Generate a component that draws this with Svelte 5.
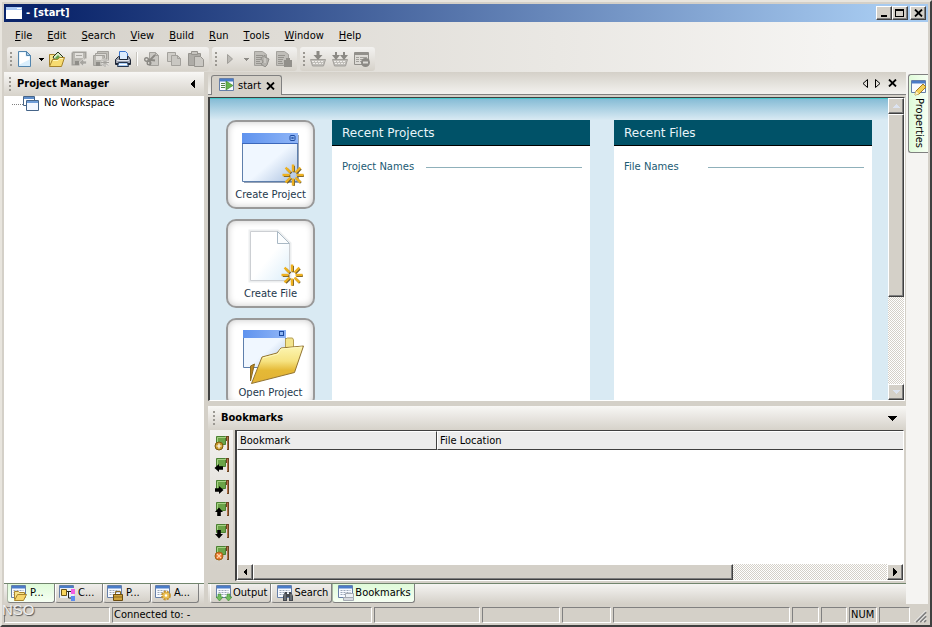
<script>
  const menus = ['File', 'Edit', 'Search', 'View', 'Build', 'Run', 'Tools', 'Window', 'Help'];
  const launchers = [
    { label: 'Create Project', art: 'window' },
    { label: 'Create File', art: 'file' },
    { label: 'Open Project', art: 'folder' }
  ];
  const cards = [
    { title: 'Recent Projects', sub: 'Project Names' },
    { title: 'Recent Files', sub: 'File Names' }
  ];
  const flags = ['add', 'left', 'right', 'up', 'down', 'clear'];
  const flagNames = {
    add: 'Add bookmark', left: 'Previous bookmark', right: 'Next bookmark',
    up: 'Previous in file', down: 'Next in file', clear: 'Clear bookmarks'
  };
  const sideTabs = [
    { label: 'P...', badge: 'folder', on: true },
    { label: 'C...', badge: 'classes', on: false },
    { label: 'P...', badge: 'case', on: false },
    { label: 'A...', badge: 'gear', on: false }
  ];
  const dockTabs = [
    { label: 'Output', badge: 'output', on: false },
    { label: 'Search', badge: 'search', on: false },
    { label: 'Bookmarks', badge: 'page', on: true }
  ];
  const cells = [
    { w: 106, text: '' }, { w: 0, text: 'Connected to: -' }, { w: 106, text: '' },
    { w: 78, text: '' }, { w: 49, text: '' }, { w: 177, text: '' }, { w: 27, text: '' },
    { w: 26, text: '' }, { w: 28, text: 'NUM' }, { w: 31, text: '' }
  ];
</script>

{#snippet tri(dir)}
  <svg width="8" height="8" viewBox="0 0 8 8" aria-hidden="true" shape-rendering="crispEdges">
    {#if dir === 'down'}<path d="M0 2h8L4 6z" />
    {:else if dir === 'up'}<path d="M0 6h8L4 2z" />
    {:else if dir === 'left'}<path d="M6 0v8L2 4z" />
    {:else}<path d="M2 0v8l4-4z" />{/if}
  </svg>
{/snippet}

{#snippet cross()}
  <svg width="9" height="8" viewBox="0 0 9 8" aria-hidden="true">
    <path d="M1 .5l7 7M8 .5l-7 7" stroke="#000" stroke-width="1.8" />
  </svg>
{/snippet}

{#snippet tool(name)}
  <svg width="16" height="16" viewBox="0 0 16 16" aria-hidden="true">
    {#if name === 'new'}
      <path d="M1.500 .5h8l4 4v11h-12z" fill="#d9eefc" stroke="#5385ad" />
      <path d="M2.500 1.500h6v4h4v3l-10 5z" fill="#fff" />
      <path d="M9.500 .5v4h4z" fill="#a9cdea" stroke="#5385ad" />
    {:else if name === 'open'}
      <path d="M.5 14.500v-11h5l1 2h7v3" fill="#f7e58b" stroke="#a5822b" />
      <path d="M4 6l5-5 5 5-2 3H6z" fill="#d9ecc8" stroke="#253218" />
      <path d="M6 7l3-3 3 3-1 2H7z" fill="#6aa54e" />
      <path d="M.5 15.500l3-7h5l2-2h5l-3 9z" fill="#f7db70" stroke="#a5822b" />
      <path d="M4 9.500h5l2-2h3" fill="none" stroke="#fff6b8" />
    {:else if name === 'save'}
      <path d="M1.500 1.500h13v6M1.500 1.500v12h7" fill="none" stroke="#a3a19c" stroke-width="2" />
      <path d="M2 2h12v6l-5 5H2z" fill="#b9b7b1" />
      <path d="M4 2h8v5H4z" fill="#e3e1dd" /><path d="M5 4.500h6" stroke="#aaa8a3" />
      <path d="M4 10h4v4H4z" fill="#8f8d88" />
      <path d="M15.500 10v3h-3v2.500L8 11.500l4.500-4V10z" fill="#a7a5a0" stroke="#e3e1dd" stroke-width=".7" />
    {:else if name === 'saveall'}
      <path d="M4.500 .5h11v9h-11z" fill="#c2c0ba" stroke="#a3a19c" />
      <path d="M2.500 2.500h11v9h-11z" fill="#dad8d3" stroke="#a3a19c" />
      <path d="M.5 4.500h11v10H.5z" fill="#b9b7b1" stroke="#a3a19c" />
      <path d="M3 5h6v4H3z" fill="#e3e1dd" /><path d="M3 11h4v4H3z" fill="#8f8d88" />
      <path d="M12 7v9M7.500 11.500h8.500M9 8.500l6 6M15 8.500l-6 6" stroke="#e3e1dd" stroke-width="2" />
      <path d="M12 7v9M7.500 11.500h8.500M9 8.500l6 6M15 8.500l-6 6" stroke="#a3a19c" />
    {:else if name === 'print'}
      <path d="M4.500 .5h6l2 2v6h-8z" fill="#dcecfd" stroke="#3d76cd" />
      <path d="M.5 8.500l3-3h1v3h8v-3h1l2 3v5H.5z" fill="#9aa1b0" stroke="#1e2635" />
      <path d="M2 9.500h12" stroke="#e4e7ee" /><path d="M1 12.500h14" stroke="#1e2635" />
      <path d="M3.500 11.500h9l1 4h-11z" fill="#a8cdf6" stroke="#28364e" />
      <path d="M4 13.500h8" stroke="#fff" />
    {:else if name === 'cut'}
      <path d="M5.500 1.500h6l3 3v10h-9z" fill="#c9c7c2" stroke="#a3a19c" />
      <path d="M11.500 1.500v3h3" fill="none" stroke="#a3a19c" />
      <path d="M11 4L5 10M11 9.500L4 8.500" stroke="#8b8984" stroke-width="1.800" />
      <circle cx="2.500" cy="8.500" r="1.800" fill="none" stroke="#8b8984" stroke-width="1.400" />
      <circle cx="5" cy="12" r="1.800" fill="none" stroke="#8b8984" stroke-width="1.400" />
    {:else if name === 'copy'}
      <path d="M1.500 1.500h8v9h-8z" fill="#cfcdc8" stroke="#a3a19c" />
      <path d="M5.500 4.500h6l3 3v7h-9z" fill="#c9c7c2" stroke="#a3a19c" />
      <path d="M11.500 4.500v3h3" fill="none" stroke="#a3a19c" />
    {:else if name === 'paste'}
      <path d="M.5 2.500h12v12H.5z" fill="#aeaca7" stroke="#96948f" />
      <path d="M3.500 .5h6v3h-6z" fill="#c6c4bf" stroke="#96948f" />
      <path d="M6.500 5.500h6l3 3v7h-9z" fill="#c9c7c2" stroke="#96948f" />
    {:else if name === 'play'}
      <path d="M5.500 3.500v9l5-4.500z" fill="#bbb9b4" stroke="#a09e99" />
    {:else if name === 'compile' || name === 'rebuild'}
      <path d="M.5 .5h8l4 3v11H.5z" fill="#c0beb9" stroke="#a3a19c" />
      <path d="M2 4.500h7M2 6.500h6M2 8.500h5M2 10.500h4M2 12.500h5" stroke="#96948f" />
      {#if name === 'compile'}
        <path d="M7 7l4-3v2l4 2-2 6-2 2-4-3 2-2z" fill="#b3b1ac" stroke="#92908b" />
        <path d="M11 7v5" stroke="#dddbd6" />
      {:else}
        <path d="M8 9h8v7H8zM10 7h4v2h-4z" fill="#92908b" />
      {/if}
    {:else if name === 'load' || name === 'loadall'}
      <path d="M.5 8.500h15l-2 6.500h-11z" fill="#c0beb9" stroke="#a3a19c" />
      <path d="M2 10.500h12M3 12.500h10" stroke="#efedea" stroke-dasharray="2 1" />
      {#if name === 'load'}
        <path d="M6.500 0h3v4h3L8 9 3.500 4h3z" fill="#8b8984" />
      {:else}
        <path d="M3 1h2v3h3L4 9 0 4h3zM11 1h2v3h3l-4 5-4-5h3z" fill="#8b8984" />
      {/if}
    {:else if name === 'unload'}
      <path d="M.5 1.500h14v12H.5z" fill="#dddbd6" stroke="#92908b" />
      <path d="M1 3h13" stroke="#92908b" stroke-width="2" />
      <path d="M2 6.500h3M6 6.500h7M2 8.500h3M6 8.500h4M2 10.500h3M6 10.500h2" stroke="#a3a19c" />
      <circle cx="11.500" cy="11.500" r="4.500" fill="#8b8984" /><path d="M9 11.500h5" stroke="#dddbd6" stroke-width="2" />
    {/if}
  </svg>
{/snippet}

{#snippet pane(badge)}
  <svg width="16" height="16" viewBox="0 0 16 16" aria-hidden="true">
    <path d="M.5 .5h14v12H.5z" fill="#f7faff" stroke="#667fa8" />
    <path d="M1 1h13v2.500H1z" fill="#4a7cc8" />
    {#if badge !== 'props' && badge !== 'start'}
      <path d="M2.500 5.500h10M2.500 7.500h10M2.500 9.500h10" stroke="#9aa7b8" stroke-dasharray="2 1" />
    {/if}
    {#if badge === 'folder'}
      <path d="M3.500 14.500v-8h4l1 1h5v2" fill="#f6e28a" stroke="#a8842c" />
      <path d="M3.500 15.500l3-6h9l-3 6z" fill="#f6d56b" stroke="#a8842c" />
    {:else if badge === 'classes'}
      <path d="M1 3h14v10H1z" fill="#e8eef8" />
      <path d="M2.500 4.500h5v6h-5z" fill="#f8d55e" stroke="#6b5416" />
      <path d="M8 6.500h4M9.500 6v7h3" stroke="#222" fill="none" />
      <path d="M12 4h4v5h-4z" fill="#f45ee0" /><path d="M12 11h4v5h-4z" fill="#5b8cf0" />
    {:else if badge === 'case'}
      <path d="M6.500 9.500h9v6h-9z" fill="#d0a43b" stroke="#6b4c10" /><path d="M8.500 9V6.500h5V9M7 12h8" fill="none" stroke="#8d6a1e" />
    {:else if badge === 'gear'}
      <circle cx="11" cy="10.500" r="3.500" fill="#ecc257" stroke="#c79430" stroke-width="2.800" stroke-dasharray="2 .8" />
      <circle cx="11" cy="10.500" r="3" fill="#ecc257" /><circle cx="11" cy="10.500" r="1.200" fill="#fff" />
    {:else if badge === 'output'}
      <path d="M2 9h3v3h2l-3.500 4L0 12h2zM11 9h3v3h2l-3.500 4L9 12h2z" fill="#6fbd5d" stroke="#3f8436" stroke-width=".6" />
    {:else if badge === 'search'}
      <path d="M6 16v-5l2-4h2v2h2V7h2l2 4v5h-4v-4h-2v4z" fill="#44484e" />
      <path d="M8 9v6M14 9v6" stroke="#8d949d" />
    {:else if badge === 'page'}
      <path d="M7.500 8.500h8v4h-8z" fill="#eef2f6" stroke="#a5aab2" /><path d="M5.500 12.500h10v3h-10z" fill="#d7dae0" stroke="#a5aab2" />
    {:else if badge === 'props'}
      <path d="M4 15l1-4 7-7 3 3-7 7z" fill="#f2cf57" stroke="#a77e22" /><path d="M4 15l1-4 3 3z" fill="#fdf3c8" />
    {:else if badge === 'start'}
      <path d="M2 5.500h4M2 7.500h4M2 9.500h4" stroke="#538246" /><path d="M7 3v9l7-4.500z" fill="#66b54b" stroke="#3c7a2b" stroke-width=".6" />
    {/if}
  </svg>
{/snippet}

{#snippet flag(kind)}
  <svg width="16" height="16" viewBox="0 0 16 16" aria-hidden="true">
    <path d="M2.500 1.500h9v8h-9z" fill="#6ba348" stroke="#4b8132" /><path d="M3.500 10V2.500H12" fill="none" stroke="#a6d184" />
    <path d="M12 1h3v14h-2V6h-1z" fill="#6b4520" /><path d="M13.500 2v12" stroke="#b4704c" />
    {#if kind === 'add'}
      <circle cx="5" cy="11" r="4" fill="#c99a28" stroke="#7c5a10" /><path d="M5 8.500v5M2.500 11h5" stroke="#fff" stroke-width="1.200" />
    {:else if kind === 'clear'}
      <circle cx="5" cy="11" r="4" fill="#e8702c" stroke="#9c6515" /><path d="M3 9l4 4M7 9l-4 4" stroke="#ffd8a8" stroke-width="1.200" />
    {:else}
      <g transform="rotate({{ left: 0, up: 90, right: 180, down: 270 }[kind]} 5 11)">
        <path d="M.5 11l4.500-4v2.200h4v3.600H5V15z" />
      </g>
    {/if}
  </svg>
{/snippet}

{#snippet spark(x, y)}
  <g transform="translate({x} {y})">
    {#each [0, 45, 90, 135, 180, 225, 270, 315] as a}
      <path d="M0-3.500V-10" transform="translate(.8 .8) rotate({a})" stroke="#6e5a2a" stroke-width="2.400" />
    {/each}
    {#each [0, 45, 90, 135, 180, 225, 270, 315] as a}
      <path d="M0-3.500V-10.500" transform="rotate({a})" stroke="#eeb11f" stroke-width="2.400" />
    {/each}
  </g>
{/snippet}

{#snippet art(kind)}
  <svg width="70" height="62" viewBox="1 0 70 62" aria-hidden="true">
    {#if kind === 'window'}
      <path d="M7.500 7.500h55v48h-55z" fill="url(#pane)" stroke="#5e7fac" />
      <path d="M9 56.500h54.500V9" fill="none" stroke="#98a3b5" />
      <path d="M7 7h56v10H7z" fill="url(#capbar)" /><path d="M7 17.500h56" stroke="#3c68bb" />
      <rect x="55" y="9.500" width="5" height="5" rx="1" fill="#8db5f2" stroke="#1d4aa0" /><path d="M56.500 11l2 2M58.500 11l-2 2" stroke="#1d4aa0" />
      {@render spark(58, 49)}
    {:else if kind === 'file'}
      <path d="M15.500 6.500h27l12 12v37h-39z" fill="none" stroke="#eceeef" stroke-width="4" />
      <path d="M15.500 6.500h27l12 12v37h-39z" fill="url(#sheet)" stroke="#cccfd3" />
      <path d="M42.500 6.500v12h12z" fill="#fbfdfe" stroke="#a9b8c4" />
      {@render spark(57, 50)}
    {:else}
      <path d="M8.500 6.500h42v37h-42z" fill="url(#pane)" stroke="#5e7fac" />
      <path d="M8 6h43v8H8z" fill="url(#capbar)" />
      <rect x="44.500" y="7.500" width="4" height="4" fill="#8db5f2" stroke="#1d4aa0" />
      <path d="M50.500 30V15l2-1h5l1 2v13z" fill="#f3e48c" stroke="#b59e52" />
      <path d="M15.500 57V42l4-2z" fill="#b98622" stroke="#8b6a20" />
      <path d="M16.500 59.500L27 33l15-4 4-5 22.500-2-9 26.500z" fill="url(#gold)" stroke="#927331" />
      <path d="M28 34l15-4 3-5 21-2" fill="none" stroke="#fff8bd" />
    {/if}
  </svg>
{/snippet}

<svg class="defs" width="0" height="0" aria-hidden="true">
  <defs>
    <linearGradient id="pane" x1="0" y1="0" x2="1" y2="1"><stop offset=".55" stop-color="#f0f7ff" /><stop offset="1" stop-color="#a9c0e0" /></linearGradient>
    <linearGradient id="capbar"><stop offset="0" stop-color="#5f93ee" /><stop offset="1" stop-color="#8fb5f7" /></linearGradient>
    <linearGradient id="sheet" x1="0" y1="0" x2="1" y2="1"><stop offset=".5" stop-color="#fff" /><stop offset="1" stop-color="#dceefa" /></linearGradient>
    <linearGradient id="gold" x1="0" y1="0" x2="0" y2="1"><stop offset="0" stop-color="#fcf6b4" /><stop offset=".4" stop-color="#f6e382" /><stop offset=".65" stop-color="#e5b936" /><stop offset="1" stop-color="#e2b235" /></linearGradient>
  </defs>
</svg>

<div class="app">
  <header class="title">
    <svg width="16" height="14" viewBox="0 0 16 14" aria-hidden="true"><path d="M0 1h16v12H0z" fill="#fff" /><path d="M0 1h16v3H0z" fill="#a9c9f5" /><path d="M11 2h4v1h-4z" fill="#fff" /></svg>
    <h1>- [start]</h1>
    <button class="cap" aria-label="Minimize"><svg width="10" height="10" shape-rendering="crispEdges"><path d="M2 7h6v2H2z" /></svg></button>
    <button class="cap" aria-label="Maximize"><svg width="10" height="10" shape-rendering="crispEdges"><path d="M.5 1.500h8v7h-8z" fill="none" stroke="#000" /><path d="M0 1h9v2H0z" /></svg></button>
    <button class="cap last" aria-label="Close">{@render cross()}</button>
  </header>

  <div class="body">
    <nav class="menu">
      {#each menus as m}<button><u>{m[0]}</u>{m.slice(1)}</button>{/each}
    </nav>

    <div class="bars">
      <div class="bar" role="toolbar" aria-label="File">
        <i class="grip"></i>
        <button class="tb" aria-label="New">{@render tool('new')}</button>
        <button class="drop" aria-label="New options"><svg width="5" height="3" shape-rendering="crispEdges"><path d="M0 0h5L2.500 3z" /></svg></button>
        {#each ['open', 'save', 'saveall', 'print'] as t}<button class="tb" aria-label={t}>{@render tool(t)}</button>{/each}
        <i class="sep"></i>
        {#each ['cut', 'copy', 'paste'] as t}<button class="tb" aria-label={t}>{@render tool(t)}</button>{/each}
      </div>
      <div class="bar" role="toolbar" aria-label="Run">
        <i class="grip"></i>
        <button class="tb" aria-label="Run">{@render tool('play')}</button>
        <button class="drop" aria-label="Run options"><svg width="5" height="3" fill="#8d8b86" shape-rendering="crispEdges"><path d="M0 0h5L2.500 3z" /></svg></button>
        {#each ['compile', 'rebuild'] as t}<button class="tb" aria-label={t}>{@render tool(t)}</button>{/each}
      </div>
      <div class="bar" role="toolbar" aria-label="Load">
        <i class="grip"></i>
        {#each ['load', 'loadall', 'unload'] as t}<button class="tb" aria-label={t}>{@render tool(t)}</button>{/each}
      </div>
    </div>

    <div class="main">
      <aside class="left">
        <div class="head"><i class="grip"></i><h2>Project Manager</h2><button aria-label="Collapse" class="plain"><svg width="5" height="10" shape-rendering="crispEdges"><path d="M5 0v10L0 5z" /></svg></button></div>
        <div class="tree">
          <i class="twig"></i>
          <svg width="16" height="15" viewBox="0 0 16 15" aria-hidden="true">
            <path d="M.5 .5h11v9H.5z" fill="#fff" stroke="#456488" /><path d="M1 1h10v2H1z" fill="#5f8ecb" />
            <path d="M3.500 4.500h12v10h-12z" fill="#f2f7ff" stroke="#456488" /><path d="M4 5h11v2H4z" fill="#6f9dd8" />
          </svg>
          <span>No Workspace</span>
        </div>
        <div class="tabs side">
          {#each sideTabs as t}<button class:on={t.on}>{@render pane(t.badge)}{t.label}</button>{/each}
        </div>
      </aside>

      <section class="center">
        <div class="docs">
          <div class="doc">{@render pane('start')}<span>start</span><button class="plain" aria-label="Close start">{@render cross()}</button></div>
          <div class="docnav">
            <button class="plain" aria-label="Previous tab"><svg width="6" height="9"><path d="M5.500 .5v8L1 4.500z" fill="none" stroke="#000" /></svg></button>
            <button class="plain" aria-label="Next tab"><svg width="6" height="9"><path d="M.5 .5v8L5 4.500z" fill="none" stroke="#000" /></svg></button>
            <button class="plain" aria-label="Close tab">{@render cross()}</button>
          </div>
        </div>
        <div class="view">
          <div class="start">
            <div class="launch">
              {#each launchers as l}<button>{@render art(l.art)}<span>{l.label}</span></button>{/each}
            </div>
            <div class="cards">
              {#each cards as c}
                <article class="card"><h3>{c.title}</h3><div class="sub"><span>{c.sub}</span><i></i></div></article>
              {/each}
            </div>
          </div>
          <div class="vbar">
            <button class="sb dim" aria-label="Scroll up">{@render tri('up')}</button>
            <div class="thumb vt"></div><div class="rest vr"></div>
            <button class="sb dim" aria-label="Scroll down">{@render tri('down')}</button>
          </div>
        </div>

        <div class="head dock"><i class="grip"></i><h2>Bookmarks</h2><button aria-label="Minimize panel" class="plain"><svg width="9" height="5" shape-rendering="crispEdges"><path d="M0 0h9L4.500 5z" /></svg></button></div>
        <div class="marks">
          <div class="flags">{#each flags as f}<button aria-label={flagNames[f]}>{@render flag(f)}</button>{/each}</div>
          <div class="list">
            <table><thead><tr><th class="first">Bookmark</th><th>File Location</th></tr></thead><tbody></tbody></table>
            <div class="hbar">
              <button class="sb" aria-label="Scroll left">{@render tri('left')}</button>
              <div class="thumb ht"></div><div class="rest hr"></div>
              <button class="sb" aria-label="Scroll right">{@render tri('right')}</button>
            </div>
          </div>
        </div>
        <div class="tabs">
          {#each dockTabs as t}<button class:on={t.on}>{@render pane(t.badge)}{t.label}</button>{/each}
        </div>
      </section>

      <aside class="right"><button>{@render pane('props')}<span>Properties</span></button></aside>
    </div>
  </div>

  <footer>
    {#each cells as c}<div class="cell" class:grow={!c.w} style:width={c.w ? c.w + 'px' : null}>{c.text}</div>{/each}
    <svg class="size" width="14" height="14" aria-hidden="true"><path d="M3 13L13 3M7 13l6-6M11 13l2-2" stroke="#808080" stroke-width="2" /><path d="M1.500 13L13 1.500M5.500 13L13 5.500M9.500 13L13 9.500" stroke="#fff" /></svg>
  </footer>
  <span class="mark">NSO</span>
</div>

<style>
  :global(body) { margin: 0; background: #d4d0c8; }
  .defs { position: absolute; }
  .app, .app * { box-sizing: border-box; }
  .app {
    position: relative; display: flex; flex-direction: column; height: 100vh; min-height: 480px; overflow: hidden;
    padding: 2px; background: #d4d0c8; border: 2px solid; border-color: #e8e5de #404040 #404040 #e8e5de;
    font: 11px/14px "DejaVu Sans Condensed", "DejaVu Sans", sans-serif; color: #000;
  }
  button { font: inherit; color: inherit; padding: 0; margin: 0; border: 0; background: none; display: flex; align-items: center; justify-content: center; }
  svg { display: block; flex: none; }
  h1, h2, h3 { margin: 0; font-size: 11px; font-weight: bold; }
  i { display: block; flex: none; }

  .title { display: flex; align-items: center; height: 18px; flex: none; padding: 0 2px; background: linear-gradient(90deg, #0a246a 5%, #a6caf0 95%); }
  .title h1 { flex: 1; margin-left: 4px; color: #fff; }
  .cap { width: 16px; height: 14px; background: #d4d0c8; border: 1px solid; border-color: #fff #404040 #404040 #fff; box-shadow: inset -1px -1px #808080; }
  .cap.last { margin-left: 2px; }

  .body { flex: 1; min-height: 0; display: flex; flex-direction: column; padding-top: 1px; background: linear-gradient(90deg, #d4d0c8, #f5f4f2 90%); }
  .menu { display: flex; gap: 1px; height: 24px; padding: 2px 0 0 4px; flex: none; }
  .menu button { padding: 0 7px; }
  .bars { display: flex; gap: 3px; height: 25px; padding-left: 3px; flex: none; }
  .bar { display: flex; align-items: center; height: 24px; padding: 0 2px; border-radius: 3px; background: linear-gradient(#f3f2f0, #d6d2ca); }
  .tb { width: 22px; height: 22px; }
  .drop { width: 10px; height: 22px; }
  .grip { width: 5px; height: 15px; background: repeating-linear-gradient(#9b9892 0 2px, transparent 2px 4px) 1px 0 / 2px 15px no-repeat; }
  .sep { width: 1px; height: 14px; margin: 0 3px; background: #fff; box-shadow: -1px 0 #c8c5be; }

  .main { flex: 1; min-height: 0; display: grid; grid-template-columns: 200px minmax(0, 1fr) 22px; }
  .left { display: flex; flex-direction: column; min-height: 0; }
  .head { display: flex; align-items: center; flex: none; height: 24px; padding: 0 9px 0 4px; background: linear-gradient(#f8f7f5, #d6d2ca); }
  .head h2 { flex: 1; margin-left: 4px; }
  .tree { flex: 1; display: flex; align-items: flex-start; gap: 5px; padding: 0 8px; background: #fff; }
  .tree .twig { width: 11px; height: 9px; border-bottom: 1px dotted #808080; margin-right: -5px; }

  .tabs { display: flex; flex: none; height: 21px; padding: 0 2px 1px; border-top: 1px solid #71856d; background: linear-gradient(#f5f4f2, #d4d0c8); }
  .tabs button { height: 19px; gap: 1px; padding: 0 3px 0 5px; border: 1px solid #808080; border-top: 0; border-left-color: #fff; border-radius: 0 0 3px 3px; background: linear-gradient(#efeeeb, #d4d0c8); }
  .tabs button.on { background: linear-gradient(#dffbd9, #f6fff3); border-left-color: #a8b5a3; }
  .tabs.side { padding-left: 3px; }
  .side button { width: 48px; gap: 3px; padding: 0 0 0 3px; justify-content: flex-start; }

  .center { display: flex; flex-direction: column; min-width: 0; min-height: 0; padding-left: 4px; background: #d4d0c8; }
  .docs { display: flex; justify-content: space-between; align-items: flex-end; height: 23px; flex: none; padding: 0 9px 0 3px; border-bottom: 1px solid #808080; background: linear-gradient(#d4d0c8, #f3f2ef); }
  .doc { display: flex; align-items: center; gap: 3px; height: 20px; padding: 0 6px 0 7px; margin-bottom: -1px; border: 1px solid #808080; border-bottom: 0; border-radius: 3px 3px 0 0; background: #d4d0c8; }
  .doc button { margin-left: 2px; }
  .docnav { display: flex; align-items: center; gap: 7px; height: 22px; }
  .view { flex: 1; min-height: 0; display: flex; margin: 2px 1px 0 0; border: 1px solid; border-color: #404040 #fff #fff #404040; border-left-width: 2px; overflow: hidden; }
  .start { flex: 1; min-width: 0; display: flex; gap: 17px; overflow: hidden; padding: 21px 16px 0; border-top: 1px solid #43c9c9; background: #d9eaf3 linear-gradient(#86bcd6, #d9eaf3) 0 0 / 100% 21px no-repeat; font-family: "DejaVu Sans", sans-serif; }
  .launch { width: 89px; flex: none; display: flex; flex-direction: column; gap: 10px; min-height: 0; }
  .launch button { flex: none; flex-direction: column; justify-content: flex-start; height: 89px; padding-top: 4px; border: 2px solid #999; border-radius: 10px; background: #fff; box-shadow: inset 0 0 7px #c9c9c9; font-size: 10px; color: #24384c; white-space: nowrap; }
  .cards { flex: 1; min-width: 0; display: grid; grid-template-columns: 1fr 1fr; gap: 24px; }
  .card { min-width: 0; background: #fff; }
  .card h3 { height: 26px; padding-left: 10px; border-bottom: 1px solid #000; background: #005268; color: #e8f4f8; font-size: 12px; line-height: 26px; font-weight: normal; }
  .sub { display: flex; align-items: center; padding: 14px 8px 0 10px; color: #1b5b74; font-size: 10px; }
  .sub span { width: 84px; white-space: nowrap; }
  .sub i { flex: 1; height: 1px; background: #8fb0ba; }

  .vbar { width: 16px; display: flex; flex-direction: column; flex: none; background: #d4d0c8; }
  .sb { width: 16px; height: 16px; flex: none; }
  .sb, .thumb { background: #d4d0c8; border: 1px solid; border-color: #fff #404040 #404040 #fff; box-shadow: inset -1px -1px #808080; }
  .dim svg { fill: #dce3f0; }
  .vt { flex: 181; } .vr { flex: 87; }
  .ht { flex: 480; } .hr { flex: 154; }
  .rest { background: repeating-conic-gradient(#d4d0c8 0 25%, #fff 0 50%) 0 0 / 2px 2px; }

  .dock { margin-top: 5px; }
  .marks { flex: none; display: flex; height: 151px; }
  .flags { width: 23px; margin: 0 2px; display: flex; flex-direction: column; align-items: center; padding-top: 2px; background: linear-gradient(#f3f2f0, #d4d0c8 90%); }
  .flags button { width: 20px; height: 22px; }
  .list { flex: 1; min-width: 0; display: flex; flex-direction: column; justify-content: space-between; margin-right: 2px; border: 1px solid; border-color: #404040 #fff #fff #404040; border-left-width: 2px; background: #fff; }
  table { width: 100%; table-layout: fixed; border-collapse: separate; border-spacing: 0; }
  th { height: 19px; padding: 0 2px; text-align: left; font-weight: normal; background: #ececec; border-top: 1px solid #fff; border-left: 1px solid #fff; border-bottom: 1px solid #404040; }
  th.first { width: 200px; border-right: 1px solid #404040; }
  .hbar { display: flex; height: 16px; }
  .center .tabs { margin-top: 2px; }

  .right { padding: 2px 0 0 2px; background: #f5f4f2; }
  .right button { width: 20px; height: 79px; flex-direction: column; justify-content: flex-start; gap: 2px; padding-top: 5px; border: 1px solid #808080; border-right: 0; border-radius: 3px 0 0 3px; background: linear-gradient(90deg, #dffbd9, #f6fff3); }
  .right span { writing-mode: vertical-rl; }

  footer { display: flex; flex: none; gap: 2px; height: 19px; padding-top: 3px; }
  .cell { height: 16px; padding-left: 1px; border: 1px solid; border-color: #808080 #fff #fff #808080; white-space: nowrap; }
  .grow { flex: 1; }
  .size { margin: 2px 1px 0; }
  .mark { position: absolute; left: 0; bottom: 6px; font: 15px/18px "Liberation Sans", sans-serif; color: #eee; text-shadow: 1px 1px 1px #555; pointer-events: none; }
</style>
